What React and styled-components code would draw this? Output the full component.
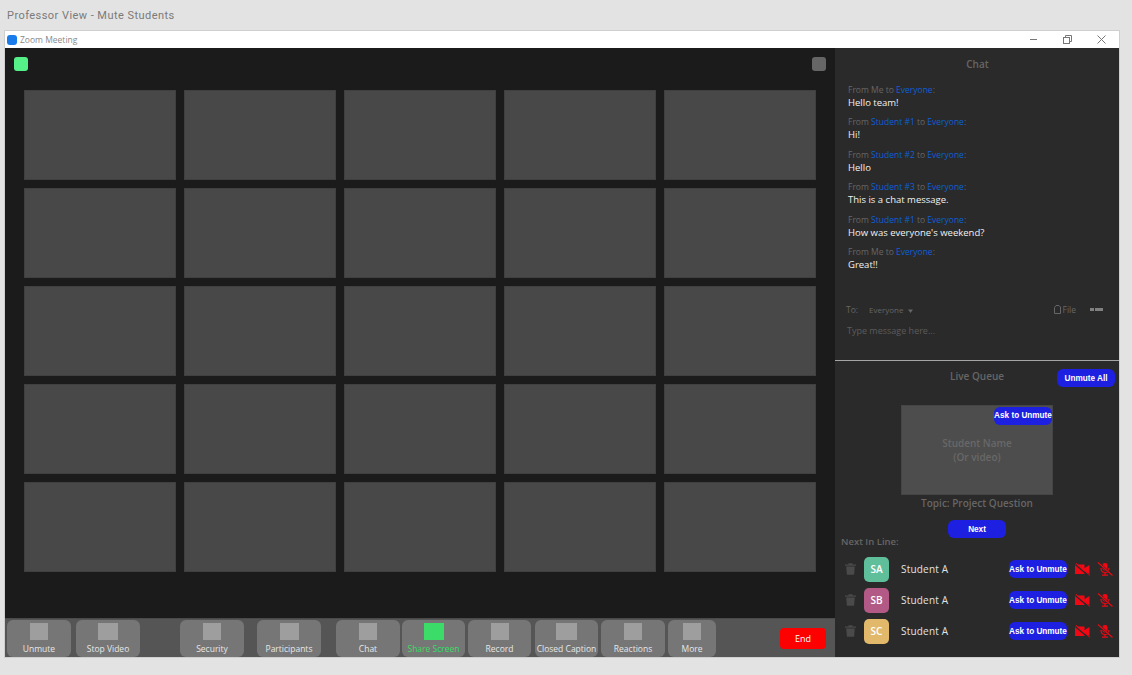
import React from 'react'
import styled, { createGlobalStyle } from 'styled-components'

const GlobalStyle = createGlobalStyle`
  html, body {
    margin: 0;
    padding: 0;
    background: #e3e3e3;
    font-family: "Open Sans", "Noto Sans", sans-serif;
  }
  * { box-sizing: border-box; }
`

// Page
const Page = styled.div`
  width: 1132px;
  height: 675px;
  padding: 0 12px 0 4px;
  overflow: hidden;
`

const PageTitle = styled.div`
  height: 30px;
  padding: 8px 0 0 3px;
  font-family: Roboto, sans-serif;
  font-size: 11px;
  line-height: 16px;
  letter-spacing: 0.45px;
  color: #7a7a7a;
`

const Window = styled.div`
  width: 1116px;
  height: 628px;
  border: 1px solid #cfcfcf;
  display: flex;
  flex-direction: column;
`

const TitleBar = styled.div`
  height: 17px;
  background: #fff;
  display: flex;
  align-items: center;
  padding-left: 2px;
  flex: none;
`

const ZoomLogo = styled.div`
  width: 10px;
  height: 10px;
  border-radius: 3px;
  background: #1a7bea;
  margin-right: 3px;
`

const TitleText = styled.div`
  font-size: 8.5px;
  color: #8a8a8a;
  flex: 1;
`

const WindowControls = styled.div`
  display: flex;
  align-items: center;
  gap: 25px;
  padding-right: 13px;
`

const Body = styled.div`
  flex: 1;
  display: flex;
  min-height: 0;
`

// Meeting side
const Meeting = styled.div`
  width: 830px;
  display: flex;
  flex-direction: column;
  flex: none;
`

const Stage = styled.div`
  height: 570px;
  background: #1b1b1b;
  padding: 9px 0 0 9px;
`

const StageTop = styled.div`
  display: flex;
  justify-content: space-between;
  padding-right: 9px;
  height: 33px;
`

const StageDot = styled.div`
  width: 14px;
  height: 14px;
  border-radius: 3px;
  background: ${props => props.color};
`

const Grid = styled.div`
  display: grid;
  grid-template-columns: repeat(5, 152px);
  grid-auto-rows: 90px;
  gap: 8px;
  padding-left: 10px;
`

const Tile = styled.div`
  background: #484848;
  border: 1px solid #404040;
`

const Toolbar = styled.div`
  height: 39px;
  background: #555;
  display: flex;
  align-items: center;
  padding: 0 9px 0 2px;
  border-top: 1px solid #4a4a4a;
`

const ToolButton = styled.div`
  width: ${props => props.width || 64}px;
  margin-left: ${props => props.offset || 0}px;
  height: 37px;
  border-radius: 6px;
  background: #767676;
  display: flex;
  flex-direction: column;
  align-items: center;
  padding-top: 3px;
  flex: none;
`

const ToolIcon = styled.div`
  width: ${props => props.size || 18}px;
  height: 17px;
  background: ${props => props.$active ? '#3bdc68' : '#9e9e9e'};
`

const ToolLabel = styled.div`
  font-size: 8.5px;
  line-height: 12px;
  margin-top: 3px;
  white-space: nowrap;
  color: ${props => props.$active ? '#3bdc68' : '#e6e6e6'};
`

const EndButton = styled.div`
  margin-left: auto;
  width: 46px;
  height: 21px;
  border-radius: 4px;
  background: #fd0000;
  color: #fff;
  font-size: 9px;
  display: flex;
  align-items: center;
  justify-content: center;
`

// Right column
const Side = styled.div`
  flex: 1;
  background: #2a2a2a;
  display: flex;
  flex-direction: column;
  min-width: 0;
`

const ChatPanel = styled.div`
  height: 313px;
  border-bottom: 1px solid #a5a5a5;
  display: flex;
  flex-direction: column;
  flex: none;
`

const PanelTitle = styled.div`
  font-size: 10px;
  line-height: 14px;
  font-weight: 600;
  color: #666;
  text-align: center;
`

const ChatTitle = styled(PanelTitle)`
  padding: 9px 0 0;
  margin-left: 1px;
`

const Messages = styled.div`
  padding: 12px 0 0 13px;
  height: 219px;
  flex: none;
`

const Message = styled.div`
  height: 32.4px;
`

const MessageMeta = styled.div`
  font-size: 8.5px;
  line-height: 13px;
  color: #666;
`

const Blue = styled.span`
  color: #0d5fd6;
`

const MessageText = styled.div`
  font-size: 9.5px;
  line-height: 13px;
  color: #f2f2f2;
`

const Composer = styled.div`
  display: flex;
  align-items: center;
  padding: 0 16px 0 11px;
  font-size: 8.5px;
  color: #666;
  height: 16px;
  margin-top: 11px;
`

const Recipient = styled.span`
  font-size: 8px;
  margin-left: 11px;
  flex: 1;
`

const FileLabel = styled.span`
  font-size: 8.5px;
  display: flex;
  align-items: center;
  gap: 2px;
  margin-right: 14px;
`

const MoreDots = styled.span`
  display: flex;
  gap: 0.5px;
`

const MoreDot = styled.i`
  width: 4px;
  height: 3px;
  background: #808080;
  display: block;
`

const Placeholder = styled.div`
  font-size: 9px;
  line-height: 12px;
  color: #5c5c5c;
  padding: 8px 0 0 12px;
`

const QueuePanel = styled.div`
  flex: 1;
  display: flex;
  flex-direction: column;
  min-height: 0;
`

const QueueHeader = styled.div`
  height: 44px;
  display: grid;
  grid-template-columns: 1fr auto 1fr;
  padding-top: 8px;
`

const HeaderSlot = styled.div`
  display: flex;
  justify-content: flex-end;
  padding-right: 4px;
`

const BlueButton = styled.div`
  width: ${props => props.width || 58}px;
  height: 18px;
  border-radius: 6px;
  background: #1d20e0;
  color: #fff;
  font-family: "Liberation Sans", Arial, sans-serif;
  font-size: 8.2px;
  font-weight: 700;
  white-space: nowrap;
  display: flex;
  align-items: center;
  justify-content: center;
  flex: none;
`

const LiveVideo = styled.div`
  position: relative;
  width: 152px;
  height: 90px;
  margin-left: 66px;
  padding-bottom: 1px;
  background: #4d4d4d;
  border: 1px solid #454545;
  display: flex;
  align-items: center;
  justify-content: center;
  text-align: center;
  font-size: 10px;
  line-height: 14px;
  font-weight: 600;
  color: #686868;
  flex: none;
`

const VideoAction = styled(BlueButton)`
  position: absolute;
  top: 1px;
  right: 0;
`

const Topic = styled(PanelTitle)`
  margin: 1px 0 0;
`

const NextRow = styled.div`
  display: flex;
  justify-content: center;
  margin-top: 10px;
`

const NextLabel = styled.div`
  font-size: 9.5px;
  line-height: 13px;
  font-weight: 600;
  color: #666;
  padding-left: 6px;
  margin-top: -3px;
`

const Rows = styled.div`
  display: flex;
  flex-direction: column;
  gap: 6.5px;
  margin-top: 9px;
`

const Row = styled.div`
  display: flex;
  align-items: center;
  height: 24.5px;
  padding-left: 10px;
`

const Avatar = styled.div`
  width: 25px;
  height: 25px;
  border-radius: 5px;
  background: ${props => props.color};
  color: #fff;
  font-size: 10px;
  font-weight: 600;
  display: flex;
  align-items: center;
  justify-content: center;
  margin-left: 8px;
`

const RowName = styled.div`
  font-size: 10px;
  color: #e2e2e2;
  letter-spacing: 0.2px;
  margin-left: 12px;
  flex: 1;
`

const RowAction = styled(BlueButton)`
  margin-right: 8px;
`

const RowIcons = styled.div`
  display: flex;
  align-items: center;
  gap: 7px;
  padding-right: 6px;
`

// Icons
const MinimizeIcon = () => (
  <svg width="9" height="9" viewBox="0 0 9 9"><path d="M1 4.500h7" stroke="#777" fill="none" /></svg>
)

const RestoreIcon = () => (
  <svg width="9" height="9" viewBox="0 0 9 9" fill="none" stroke="#777">
    <rect x="0.500" y="2.500" width="6" height="6" />
    <path d="M2.500 2.500v-2h6v6h-2" />
  </svg>
)

const CloseIcon = () => (
  <svg width="9" height="9" viewBox="0 0 9 9"><path d="M.5.500l8 8M8.500.500l-8 8" stroke="#777" fill="none" /></svg>
)

const CaretIcon = () => (
  <svg width="5" height="4" viewBox="0 0 5 4" style={{ marginLeft: 5 }}><path d="M0 .5h5L2.500 4z" fill="#666" /></svg>
)

const FileIcon = () => (
  <svg width="7" height="9" viewBox="0 0 7 9" fill="none" stroke="#666"><path d="M2 .5h3l1.500 1.500v6.500h-6v-6z" /></svg>
)

const TrashIcon = () => (
  <svg width="11" height="12" viewBox="0 0 11 12" fill="#4a4a4a">
    <path d="M0 1.500h11v1.200h-11zM3.500.3h4v1.200h-4zM1.200 3.400h8.600l-.7 8.300h-7.200z" />
  </svg>
)

const VideoOffIcon = () => (
  <svg width="15" height="13" viewBox="0 0 15 13">
    <path d="M0 1.500h9.500v9.500h-9.500zM9.500 5l5-3v9l-5-3z" fill="#f00814" />
    <path d="M.5 1.800l13 11" stroke="#2a2a2a" strokeWidth="1.200" />
    <path d="M1 .3l14 12.200" stroke="#f00814" strokeWidth="1" />
  </svg>
)

const MicOffIcon = () => (
  <svg width="16" height="14" viewBox="0 0 16 14" fill="none">
    <rect x="5.500" y="1" width="5" height="7.500" rx="2.200" fill="#f00814" />
    <path d="M4 6c0 3 1.500 4.500 4 4.500s4-1.500 4-4.500M8 10.500v2.500M5 13.200h6" stroke="#f00814" strokeWidth="1.200" />
    <path d="M1 .5l14.500 13" stroke="#2a2a2a" strokeWidth="2.200" />
    <path d="M1 .5l14.500 13" stroke="#f00814" strokeWidth="1.100" />
  </svg>
)

// Data
const messages = [
  { from: 'Me', text: 'Hello team!' },
  { from: 'Student #1', text: 'Hi!' },
  { from: 'Student #2', text: 'Hello' },
  { from: 'Student #3', text: 'This is a chat message.' },
  { from: 'Student #1', text: "How was everyone's weekend?" },
  { from: 'Me', text: 'Great!!' },
]

const tools = [
  { label: 'Unmute', size: 18 },
  { label: 'Stop Video', size: 20, offset: 5 },
  { label: 'Security', size: 18, offset: 40 },
  { label: 'Participants', size: 19, offset: 13 },
  { label: 'Chat', size: 18, offset: 15 },
  { label: 'Share Screen', size: 20, offset: 2, width: 63, active: true },
  { label: 'Record', size: 18, offset: 3, width: 63 },
  { label: 'Closed Caption', size: 21, offset: 4, width: 63 },
  { label: 'Reactions', size: 18, offset: 3 },
  { label: 'More', size: 18, offset: 3, width: 48 },
]

const queue = [
  { initials: 'SA', color: '#5fbf9b' },
  { initials: 'SB', color: '#b25a85' },
  { initials: 'SC', color: '#e2b96b' },
]

const tiles = Array.from({ length: 25 }, (_, i) => i)

// Component
const App = () => (
  <Page>
    <GlobalStyle />
    <PageTitle>Professor View - Mute Students</PageTitle>
    <Window>
      <TitleBar>
        <ZoomLogo />
        <TitleText>Zoom Meeting</TitleText>
        <WindowControls>
          <MinimizeIcon />
          <RestoreIcon />
          <CloseIcon />
        </WindowControls>
      </TitleBar>
      <Body>
        <Meeting>
          <Stage>
            <StageTop>
              <StageDot color="#55f088" />
              <StageDot color="#666" />
            </StageTop>
            <Grid>
              {tiles.map(i => <Tile key={i} />)}
            </Grid>
          </Stage>
          <Toolbar>
            {tools.map(tool => (
              <ToolButton key={tool.label} width={tool.width} offset={tool.offset}>
                <ToolIcon size={tool.size} $active={tool.active} />
                <ToolLabel $active={tool.active}>{tool.label}</ToolLabel>
              </ToolButton>
            ))}
            <EndButton>End</EndButton>
          </Toolbar>
        </Meeting>
        <Side>
          <ChatPanel>
            <ChatTitle>Chat</ChatTitle>
            <Messages>
              {messages.map((message, i) => (
                <Message key={i}>
                  <MessageMeta>
                    From {message.from === 'Me' ? 'Me' : <Blue>{message.from}</Blue>} to <Blue>Everyone</Blue>:
                  </MessageMeta>
                  <MessageText>{message.text}</MessageText>
                </Message>
              ))}
            </Messages>
            <Composer>
              To:
              <Recipient>Everyone<CaretIcon /></Recipient>
              <FileLabel><FileIcon />File</FileLabel>
              <MoreDots><MoreDot /><MoreDot /><MoreDot /></MoreDots>
            </Composer>
            <Placeholder>Type message here...</Placeholder>
          </ChatPanel>
          <QueuePanel>
            <QueueHeader>
              <div />
              <PanelTitle>Live Queue</PanelTitle>
              <HeaderSlot><BlueButton>Unmute All</BlueButton></HeaderSlot>
            </QueueHeader>
            <LiveVideo>
              <VideoAction>Ask to Unmute</VideoAction>
              <div>Student Name<br />(Or video)</div>
            </LiveVideo>
            <Topic>Topic: Project Question</Topic>
            <NextRow><BlueButton>Next</BlueButton></NextRow>
            <NextLabel>Next In Line:</NextLabel>
            <Rows>
              {queue.map(student => (
                <Row key={student.initials}>
                  <TrashIcon />
                  <Avatar color={student.color}>{student.initials}</Avatar>
                  <RowName>Student A</RowName>
                  <RowAction>Ask to Unmute</RowAction>
                  <RowIcons>
                    <VideoOffIcon />
                    <MicOffIcon />
                  </RowIcons>
                </Row>
              ))}
            </Rows>
          </QueuePanel>
        </Side>
      </Body>
    </Window>
  </Page>
)

export default App
